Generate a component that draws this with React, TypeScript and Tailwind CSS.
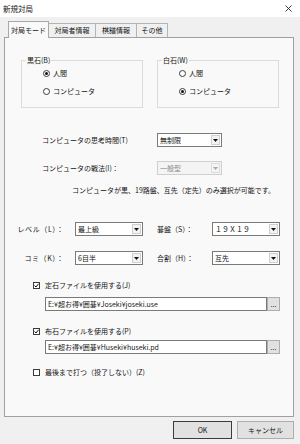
import React from "react";

const Radio = ({ label, checked = false }: { label: string; checked?: boolean }) => (
  <div className="flex h-[8px] items-center gap-[3px]">
    <span className="flex h-[7px] w-[7px] items-center justify-center rounded-full border border-[#3a3a3a] bg-white">
      {checked && <span className="h-[3px] w-[3px] rounded-full bg-[#111]" />}
    </span>
    <span className="leading-none">{label}</span>
  </div>
);

const Check = ({ label, checked = false }: { label: string; checked?: boolean }) => (
  <div className="flex h-[8px] items-center gap-[5px] pl-[28px]">
    <span className="flex h-[7px] w-[7px] items-center justify-center border border-[#3a3a3a] bg-white">
      {checked && (
        <svg width="5" height="5" viewBox="0 0 5 5">
          <path d="M0.5 2.5 L2 4 L4.5 0.8" stroke="#111" strokeWidth="1" fill="none" />
        </svg>
      )}
    </span>
    <span className="leading-none">{label}</span>
  </div>
);

const Select = ({
  value,
  disabled = false,
  className = "",
}: {
  value: string;
  disabled?: boolean;
  className?: string;
}) => (
  <div
    className={`flex h-[14px] items-stretch border ${
      disabled
        ? "border-[#cfcfcf] bg-[#f4f4f4] text-[#8c8c8c]"
        : "border-[#7a7a7a] bg-white text-[#111]"
    } ${className}`}
  >
    <span className="flex flex-1 items-center pl-[2px] leading-none">{value}</span>
    <span
      className={`my-[1px] mr-[1px] flex w-[9px] items-center justify-center border ${
        disabled ? "border-[#dddddd]" : "border-[#cfcfcf] bg-[#f3f3f3]"
      }`}
    >
      <svg width="5" height="3" viewBox="0 0 5 3">
        <path d="M0 0 H5 L2.5 3 Z" fill={disabled ? "#a8a8a8" : "#111"} />
      </svg>
    </span>
  </div>
);

const FileRow = ({ path }: { path: string }) => (
  <div className="flex h-[14px] pl-[40px]">
    <div className="flex w-[222px] items-center border border-[#7a7a7a] bg-white pl-[2px] leading-none">
      {path}
    </div>
    <div className="flex w-[13px] items-center justify-center border border-[#adadad] bg-[#e1e1e1] leading-none">
      ...
    </div>
  </div>
);

const Group = ({ title, human }: { title: string; human: boolean }) => (
  <fieldset className="w-[122px] border border-[#dcdcdc] pl-[4px]">
    <legend className="px-[1px] leading-[8px]">{title}</legend>
    <div className="flex flex-col gap-[10px] pb-[12px] pl-[17px] pt-[5px]">
      <Radio label="人間" checked={human} />
      <Radio label="コンピュータ" checked={!human} />
    </div>
  </fieldset>
);

const tabs = [
  { name: "対局モード", w: "w-[41px]" },
  { name: "対局者情報", w: "w-[48px]" },
  { name: "棋譜情報", w: "w-[42px]" },
  { name: "その他", w: "w-[32px]" },
];

export default function App() {
  return (
    <div className="h-[444px] w-[300px] overflow-hidden bg-[#f0f0f0] font-['Noto_Sans_CJK_JP','Noto_Sans_CJK_SC',sans-serif] text-[7px] text-[#151515]">
      {/* title bar */}
      <div className="flex h-[17px] items-center justify-between bg-white pl-[3px] pr-[8px]">
        <span className="text-[7.5px] leading-none">新規対局</span>
        <svg width="7" height="7" viewBox="0 0 7 7">
          <path d="M0.5 0.5 L6.5 6.5 M6.5 0.5 L0.5 6.5" stroke="#222" strokeWidth="0.9" />
        </svg>
      </div>

      {/* tabs */}
      <div className="flex h-[20px] items-end pl-[8px]">
        {tabs.map((t, i) =>
          i === 0 ? (
            <div
              key={t.name}
              className={`relative z-10 -mb-[1px] flex h-[17px] items-center justify-center border border-b-0 border-[#a8a8a8] bg-[#f9f9f9] ${t.w}`}
            >
              <span className="leading-none">{t.name}</span>
            </div>
          ) : (
            <div
              key={t.name}
              className={`-ml-[1px] flex h-[14px] items-center justify-center border border-b-0 border-[#b4b4b4] bg-[#f0f0f0] ${t.w}`}
            >
              <span className="leading-none">{t.name}</span>
            </div>
          )
        )}
      </div>

      {/* tab page */}
      <div className="ml-[4px] flex h-[380px] w-[290px] flex-col border border-[#a0a0a0] bg-[#f9f9f9]">
        <div className="mt-[18px] flex gap-[14px] pl-[16px]">
          <Group title="黒石(B)" human />
          <Group title="白石(W)" human={false} />
        </div>

        <div className="mt-[25px] flex h-[14px] items-center pl-[37px]">
          <span className="w-[115px] leading-none">コンピュータの思考時間(T)</span>
          <Select value="無制限" className="w-[65px]" />
        </div>
        <div className="mt-[14px] flex h-[14px] items-center pl-[37px]">
          <span className="w-[115px] leading-none">コンピュータの戦法(I)：</span>
          <Select value="一般型" disabled className="w-[65px]" />
        </div>

        <div className="mt-[11px] h-[8px] pl-[67px] leading-[8px]">
          コンピュータが黒、19路盤、互先（定先）のみ選択が可能です。
        </div>

        <div className="mt-[28px] flex h-[14px] items-center pl-[13px]">
          <div className="flex w-[46px] justify-end overflow-hidden whitespace-nowrap leading-none tracking-[0.6px]">
            レベル（L）：
          </div>
          <Select value="最上級" className="ml-[11px] w-[68px]" />
          <span className="ml-[14px] w-[55px] leading-none">碁盤（S）：</span>
          <Select value="１９Ｘ１９" className="w-[68px]" />
        </div>
        <div className="mt-[15px] flex h-[14px] items-center pl-[13px]">
          <div className="flex w-[46px] justify-end whitespace-nowrap leading-none tracking-[0.6px]">
            コミ（K）：
          </div>
          <Select value="6目半" className="ml-[11px] w-[68px]" />
          <span className="ml-[14px] w-[55px] leading-none">合割（H）：</span>
          <Select value="互先" className="w-[68px]" />
        </div>

        <div className="mt-[16px]">
          <Check label="定石ファイルを使用する(J)" checked />
        </div>
        <div className="mt-[8px]">
          <FileRow path="E:¥超お得¥囲碁¥Joseki¥joseki.use" />
        </div>
        <div className="mt-[16px]">
          <Check label="布石ファイルを使用する(P)" checked />
        </div>
        <div className="mt-[5px]">
          <FileRow path="E:¥超お得¥囲碁¥Huseki¥huseki.pd" />
        </div>
        <div className="mt-[14px]">
          <Check label="最後まで打つ（投了しない）(Z)" />
        </div>
      </div>

      {/* buttons */}
      <div className="mt-[4px] flex justify-end gap-[5px] pr-[6px]">
        <button className="flex h-[18px] w-[59px] items-center justify-center border border-[#3c3c3c] bg-[#e1e1e1] leading-none">
          OK
        </button>
        <button className="flex h-[18px] w-[57px] items-center justify-center border border-[#adadad] bg-[#e1e1e1] leading-none">
          キャンセル
        </button>
      </div>
    </div>
  );
}
